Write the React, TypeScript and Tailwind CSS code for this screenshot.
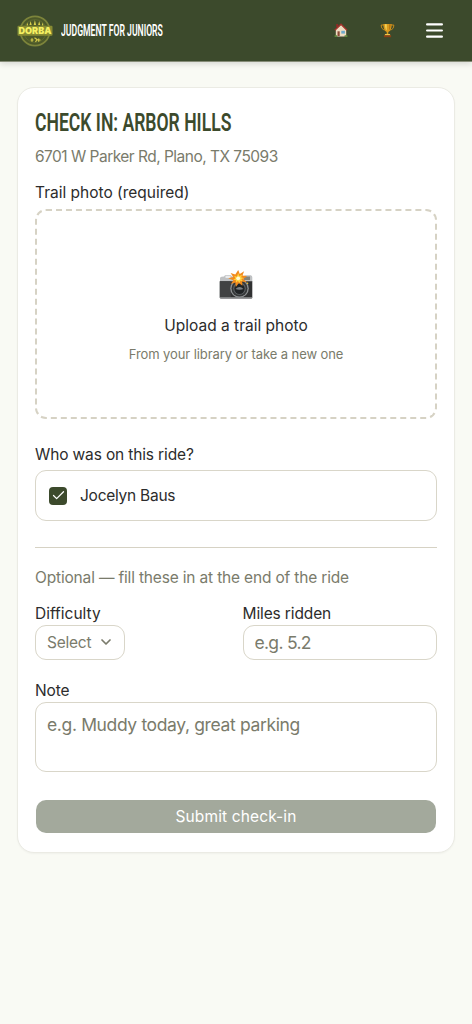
import { Menu, Check, ChevronDown } from "lucide-react";

function DorbaLogo() {
  return (
    <svg viewBox="0 0 36 34" className="w-9 h-[34px]">
      <circle cx="18" cy="17" r="14.7" fill="#4c5829" stroke="#7c843b" strokeWidth="1.7" />
      <circle cx="18" cy="17" r="11.5" fill="none" stroke="#626d32" strokeWidth="0.8" />
      <g fill="#d8cf4c">
        <path d="M9.500 11.500l.8-3 .9 3zM12.500 11l1.100-4 1.100 4zM16.700 11l1.200-5 1.200 5zM21.100 11l1.100-4 1.100 4zM24.800 11.500l.8-3 .9 3z" />
      </g>
      <rect x="0.5" y="11.7" width="35" height="10" rx="1" fill="#868a32" />
      <text
        x="18"
        y="20.200"
        textAnchor="middle"
        textLength="33"
        lengthAdjust="spacingAndGlyphs"
        fontFamily="Inter, sans-serif"
        fontWeight="900"
        fontSize="9.500"
        fill="#f4ef62"
      >
        DORBA
      </text>
      <path
        d="M13.500 26h3M15 24.300v3.400M17.500 23.800l2.500 1.700-1.500 2.500M19.500 26h4M21.700 24.500v3.200"
        fill="none"
        stroke="#d3ca4a"
        strokeWidth="1.200"
      />
    </svg>
  );
}

function HouseIcon() {
  return (
    <svg viewBox="0 0 14 15" className="w-[14px] h-[15px]">
      <path d="M2.200 1h2v3h-2z" fill="#8f2a26" />
      <path d="M1.800 6.500L7.200 1.800l5 4.700V13H1.800z" fill="#eedcc0" />
      <path d="M.8 7.200L7 1.300l6 5.900" fill="none" stroke="#a5322c" strokeWidth="1.400" />
      <path d="M3.500 8.300h2.200V13H3.500z" fill="#8a4936" />
      <path d="M7.300 7.800h3.600v2.800H7.300z" fill="#6fa9cc" />
      <path d="M.6 12.200h2.600V14H.6zM10.600 12.200h2.800V14h-2.800z" fill="#5f8a3c" />
      <path d="M3.200 13h7.400v.9H3.200z" fill="#a79a88" />
    </svg>
  );
}

function TrophyIcon() {
  return (
    <svg viewBox="0 0 15 15" className="w-[15px] h-[15px]">
      <path
        d="M3.800 2H1.200c0 3 1.200 4.600 3.600 5M11.200 2h2.600c0 3-1.200 4.600-3.600 5"
        fill="none"
        stroke="#c68a1c"
        strokeWidth="1"
      />
      <path d="M3.300.9h8.400c0 4.400-1.200 7.200-3.400 8.100v2.400H6.700V9C4.500 8.100 3.300 5.300 3.300.9z" fill="#d99a1d" />
      <path d="M5 1.200h1.700v6.300C5.600 6.600 5 4 5 1.200z" fill="#f7d75c" />
      <path d="M9.300 1.200h1.300c0 2.800-.4 4.800-1.300 6z" fill="#a96b10" />
      <path d="M5.200 11h4.600l.8 1.500H4.400z" fill="#f0c64a" />
      <path d="M3.900 12.300h7.200v1.900H3.900z" fill="#8b3f14" />
    </svg>
  );
}

function CameraIcon() {
  return (
    <svg viewBox="0 0 34 30" className="w-[34px] h-[30px]">
      <path d="M1 8.500q0-1.500 1.500-1.700L5 6.500 6 5.200h6l1 1.300h12l.6-1.300h6.200q1.500.3 1.500 2V12H1z" fill="#bfc1c3" />
      <path d="M6.500 6h5v2h-5z" fill="#e9eaeb" />
      <path d="M25 6.500h6v3.500h-6z" fill="#85847c" />
      <path d="M.8 11.300h32.500v16.200q0 1-1 1H1.800q-1 0-1-1z" fill="#303132" />
      <path d="M.8 11.300h11v16.500h-11z" fill="#414243" />
      <path d="M1 27.300h32.200v1H1z" fill="#96989a" />
      <circle cx="20.500" cy="18.500" r="9.300" fill="#8e9193" />
      <circle cx="20.500" cy="18.500" r="8" fill="#353738" />
      <circle cx="20.500" cy="18.500" r="6.300" fill="#5f6467" />
      <circle cx="20.500" cy="18.800" r="5.200" fill="#202325" />
      <path d="M16.500 19q4-4 8 0-4 1.500-8 0z" fill="#7b8084" />
      <path
        d="M19.200 0l1.600 4 4.300-2.700-1.600 4.300 4.700.7-3.900 2.500 3.500 3.400-4.700-.7.300 4.300-3.500-2.800-3.100 4-.5-4.600-4.600 1.500 2.700-3.700-5.200-1.900 5-1.300-2.600-4 4.700 1.500z"
        fill="#f28b1d"
      />
      <path
        d="M19.300 3l1 3 2.800-1.200-1 2.400 2.600.7-2.400 1.300 1.600 2.100-2.700-.5-.4 2.200-1.900-1.900-2 1.700.1-2.600-3-.6 2.500-1.100-1.300-2.700 2.600 1z"
        fill="#ffd23c"
      />
      <circle cx="19.200" cy="8.300" r="1.900" fill="#fffbd6" />
      <circle cx="28.500" cy="13.300" r=".8" fill="#f2c230" />
    </svg>
  );
}

export default function App() {
  return (
    <div className="min-h-screen bg-[#f9faf4] font-['Inter',sans-serif] text-base text-[#2c2c2c]">
      <header className="flex h-[62px] items-center border-b border-[#858b76] bg-[#3c4a2c] pr-[27px] pl-[17px] shadow-[0_2px_6px_rgba(0,0,0,0.14)]">
        <DorbaLogo />
        <span className="ml-2 w-[102px] origin-left scale-x-[0.524] font-['Roboto',sans-serif] text-[16.500px] leading-5 font-semibold whitespace-nowrap text-white">
          JUDGMENT FOR JUNIORS
        </span>
        <nav className="ml-auto flex items-center">
          <HouseIcon />
          <span className="ml-8 flex">
            <TrophyIcon />
          </span>
          <Menu className="ml-[29px] size-[21px] scale-x-[1.060] text-white" strokeWidth={2.300} />
        </nav>
      </header>

      <main className="px-[17px] pt-[25px]">
        <section className="h-[766px] rounded-[17px] border border-[#ebebe4] bg-white px-[17px] pt-5 shadow-[0_1px_2px_rgba(0,0,0,0.04)]">
          <h1 className="h-7 w-[196px] origin-left scale-x-[0.663] font-['Roboto',sans-serif] text-[26.500px] leading-7 font-semibold whitespace-nowrap text-[#3c4a2c]">
            CHECK IN: ARBOR HILLS
          </h1>
          <p className="mt-[9px] text-[15.500px] leading-6 tracking-[-0.52px] text-[#7a7b6b]">
            6701 W Parker Rd, Plano, TX 75093
          </p>

          <p className="mt-3 text-[15.500px] leading-6">Trail photo (required)</p>
          <button className="mt-1 flex h-[210px] w-full flex-col items-center rounded-[11px] border-2 border-dashed border-[#d6d2c4] pt-[59px]">
            <CameraIcon />
            <span className="mt-[14px] text-[15.500px] leading-6">Upload a trail photo</span>
            <span className="mt-[6px] text-[13px] leading-5 tracking-[-0.09px] text-[#7a7b6b]">
              From your library or take a new one
            </span>
          </button>

          <p className="mt-6 text-[15.500px] leading-6 tracking-[-0.14px]">Who was on this ride?</p>
          <label className="mt-[3px] flex h-[51px] items-center rounded-[11px] border border-[#d9d6c9] px-[13px]">
            <span className="flex size-[18px] items-center justify-center rounded-[4px] bg-[#3c4a2c]">
              <Check className="size-[15px] text-white" strokeWidth={2} />
            </span>
            <span className="ml-[13px] text-[15.500px] leading-6 tracking-[-0.25px]">Jocelyn Baus</span>
          </label>

          <hr className="mt-[26px] border-[#d6d2c4]" />
          <p className="mt-[18px] text-[15.500px] leading-6 tracking-[-0.17px] text-[#7a7b6b]">
            Optional — fill these in at the end of the ride
          </p>

          <div className="mt-3 grid grid-cols-[194px_194px] gap-x-[13.500px]">
            <div>
              <p className="h-[23px] text-[15.500px] leading-6">Difficulty</p>
              <button className="flex h-[35px] w-[90px] items-center rounded-[11px] border border-[#d9d6c9] pt-px pl-[11px] text-[15.500px] tracking-[-0.25px] text-[#7a7b6b]">
                Select
                <ChevronDown className="ml-[7px] size-4 -translate-y-px" strokeWidth={2.600} />
              </button>
            </div>
            <div>
              <p className="h-[23px] text-[15.500px] leading-6 tracking-[-0.12px]">Miles ridden</p>
              <input
                placeholder="e.g. 5.2"
                className="block h-[35px] w-[194px] rounded-[11px] border border-[#d9d6c9] px-[11px] text-[17.500px] tracking-[-0.7px] placeholder:text-[#7a7b6b]"
              />
            </div>
          </div>

          <p className="mt-[19px] text-[15.500px] leading-6 tracking-[-0.1px]">Note</p>
          <textarea
            placeholder="e.g. Muddy today, great parking"
            className="-mt-px block h-[70px] w-full resize-none rounded-[11px] border border-[#d9d6c9] px-[11px] pt-2 text-[17.500px] leading-7 tracking-[-0.36px] placeholder:text-[#7a7b6b]"
          />

          <button className="mx-px mt-7 block h-[33px] w-[400px] rounded-[10px] bg-[#a3a99c] text-[15.500px] tracking-[0.13px] text-white">
            Submit check-in
          </button>
        </section>
      </main>
    </div>
  );
}
